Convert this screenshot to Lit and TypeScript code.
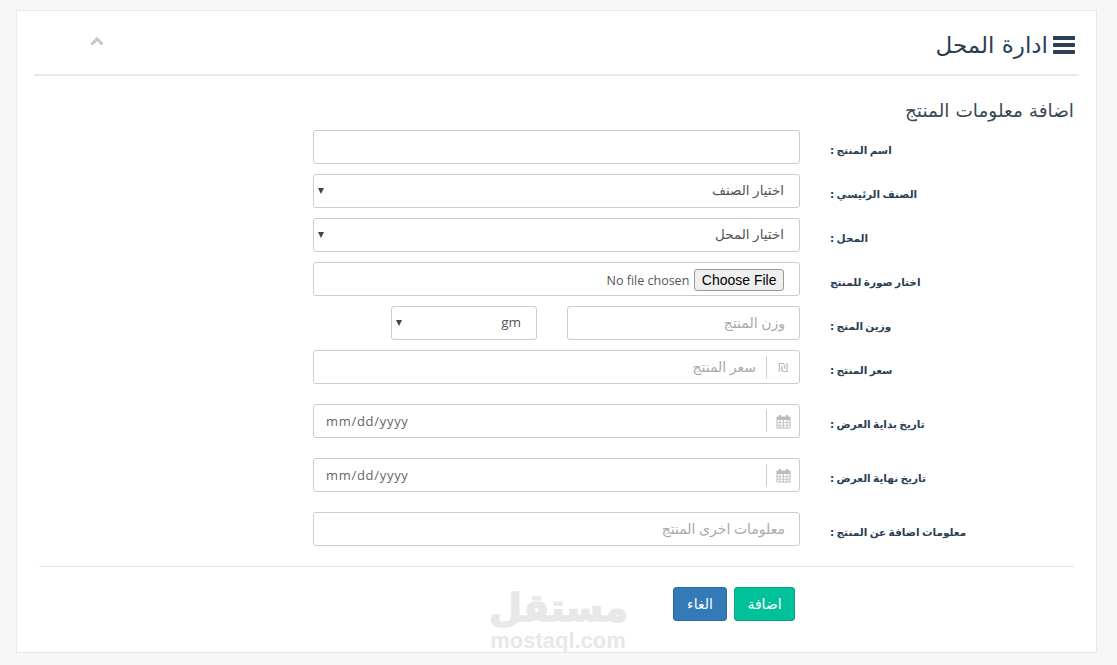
import { LitElement, html, css } from "lit";
import { customElement } from "lit/decorators.js";

const calendarIcon = html`<svg class="cal" width="15" height="15" viewBox="0 0 15 15">
  <path d="M1 3h13v11H1z" fill="none" stroke="currentColor"/>
  <path d="M1 3h13v3H1z" fill="currentColor"/>
  <path d="M4 1v3M11 1v3" stroke="currentColor" stroke-width="2"/>
  <path d="M4 6v8M7.5 6v8M11 6v8M1 8.7h13M1 11.3h13" stroke="currentColor" stroke-width=".8"/>
</svg>`;

@customElement("app-root")
export class AppRoot extends LitElement {
  static styles = css`
    :host {
      display: block;
      height: 665px;
      background: #f7f7f7;
      overflow: hidden;
      font-family: "DejaVu Sans", "Noto Sans", sans-serif;
      color: #2a3f54;
    }
    .panel {
      position: relative;
      box-sizing: border-box;
      height: 643px;
      margin: 10px 20px 0 16px;
      padding: 0 17px;
      background: #fff;
      border: 1px solid #e6e9ed;
    }
    .title {
      display: flex;
      align-items: center;
      justify-content: space-between;
      height: 65px;
      padding-top: 5px;
      box-sizing: border-box;
      border-bottom: 2px solid #e6e9ed;
    }
    .title-main {
      display: flex;
      align-items: center;
      gap: 5px;
      padding-right: 4px;
      font-size: 23px;
      color: #2a3f54;
      line-height: 1;
    }
    .chevron {
      margin-left: 56px;
      margin-bottom: 8px;
    }
    .body { padding: 0 5px; }
    .subtitle {
      margin: 0;
      height: 54px;
      box-sizing: border-box;
      padding-top: 24px;
      font-size: 18.5px;
      font-weight: normal;
      line-height: 22px;
      color: #3a4a58;
    }
    .row {
      display: grid;
      grid-template-columns: 244px 487px;
      column-gap: 30px;
      margin-bottom: 10px;
      height: 34px;
    }
    .row.wide { margin-bottom: 20px; }
    .label {
      text-align: left;
      font-size: 10.5px;
      word-spacing: -1.3px;
      font-weight: bold;
      line-height: 16px;
      padding-top: 12px;
      color: #2a3f54;
    }
    .field, input.plain, select {
      box-sizing: border-box;
      width: 100%;
      height: 34px;
      border: 1px solid #ccc;
      border-radius: 3px;
      background: #fff;
      font-size: 14px;
      color: #555;
      font-family: "Open Sans", "DejaVu Sans", sans-serif;
    }
    input.plain { padding: 5px 14px 7px; outline: none; }
    select {
      appearance: none;
      padding: 5px 15px 7px;
      font-size: 13.5px;
    }
    .select { position: relative; display: block; }
    .select::after {
      content: "";
      position: absolute;
      left: 5px;
      top: 14px;
      border-left: 3px solid transparent;
      border-right: 3px solid transparent;
      border-top: 6px solid #444;
    }
    input::placeholder { color: #aaa; opacity: 1; }
    .field { display: flex; align-items: center; }
    .field input {
      flex: 1;
      min-width: 0;
      border: 0;
      outline: none;
      background: transparent;
      font: inherit;
      color: inherit;
      padding: 0 10px 2px;
    }
    .field input.date {
      direction: ltr;
      text-align: left;
      padding: 0 12px 1px;
      letter-spacing: 0.7px;
      font-size: 13px;
      color: #666;
    }
    .addon {
      width: 32px;
      height: 22px;
      flex: none;
      display: flex;
      align-items: center;
      justify-content: center;
      border-left: 1px solid #ccc;
      color: #bbb;
      font-family: "DejaVu Sans", sans-serif;
      font-size: 13px;
    }
    .cal { display: block; }
    .file {
      padding: 1px 15px 0;
    }
    .file input {
      padding: 0;
      font-size: 12.5px;
      color: #555;
      font-family: "Open Sans", sans-serif;
      height: 22px;
    }
    .file input::file-selector-button {
      font-family: "Liberation Sans", Arial, sans-serif;
      font-size: 14px;
      height: 22px;
      padding: 0 6.5px;
      margin: 0 0 0 5px;
      color: #000;
      background: #efefef;
      border: 1px solid #999;
      border-radius: 3px;
    }
    .pair { display: flex; gap: 30px; }
    .pair .weight { width: 233px; flex: none; }
    .pair .select { width: 146px; flex: none; }
    hr {
      margin: 0;
      height: 1px;
      border: 0;
      background: #e5e5e5;
    }
    .actions {
      display: flex;
      gap: 7px;
      padding: 20px 279px 0 0;
    }
    .btn {
      height: 34px;
      padding: 0;
      box-sizing: border-box;
      border-radius: 3px;
      border: 1px solid;
      color: #fff;
      font-family: inherit;
      font-size: 14px;
    }
    .btn.add { width: 61px; background: #00c19a; border-color: #10a585; }
    .btn.cancel { width: 54px; background: #337ab7; border-color: #2e6da4; }
    .mark {
      position: absolute;
      left: 472px;
      top: 575px;
      width: 138px;
      text-align: center;
      color: #e8e8e8;
      direction: ltr;
      pointer-events: none;
    }
    .mark b {
      display: block;
      font-size: 38px;
      line-height: 44px;
      -webkit-text-stroke: 1.5px #e8e8e8;
    }
    .mark span {
      display: block;
      font-family: "Liberation Sans", Arial, sans-serif;
      font-weight: bold;
      font-size: 22px;
      line-height: 21px;
    }
  `;

  private row(label: string, control: unknown, wide = false) {
    return html`<div class="row ${wide ? "wide" : ""}">
      <div class="label">${label}</div>
      <div>${control}</div>
    </div>`;
  }

  private select(text: string) {
    return html`<span class="select"><select><option>${text}</option></select></span>`;
  }

  private dateField() {
    return html`<div class="field">
      <span class="addon">${calendarIcon}</span>
      <input class="date" value="mm/dd/yyyy" />
    </div>`;
  }

  render() {
    return html`<div class="panel" dir="rtl">
      <div class="title">
        <div class="title-main">
          <svg width="22" height="18" viewBox="0 0 22 18" fill="currentColor">
            <rect y="0" width="22" height="4" rx=".8" />
            <rect y="7" width="22" height="4" rx=".8" />
            <rect y="14" width="22" height="4" rx=".8" />
          </svg>
          <span>ادارة المحل</span>
        </div>
        <svg class="chevron" width="14" height="9" viewBox="0 0 14 9">
          <path d="M1.5 7.5 7 2l5.5 5.5" fill="none" stroke="#c5c7cb" stroke-width="3" />
        </svg>
      </div>
      <div class="body">
        <h4 class="subtitle">اضافة معلومات المنتج</h4>
        ${this.row("اسم المنتج :", html`<input class="plain" />`)}
        ${this.row("الصنف الرئيسي :", this.select("اختيار الصنف"))}
        ${this.row("المحل :", this.select("اختيار المحل"))}
        ${this.row("اختار صورة للمنتج", html`<div class="field file"><input type="file" dir="rtl" /></div>`)}
        ${this.row(
          "وزين المتج :",
          html`<div class="pair">
            <input class="plain weight" placeholder="وزن المنتج" />
            ${this.select("gm")}
          </div>`,
        )}
        ${this.row(
          "سعر المنتج :",
          html`<div class="field">
            <span class="addon">₪</span>
            <input placeholder="سعر المنتج" />
          </div>`,
          true,
        )}
        ${this.row("تاريخ بداية العرض :", this.dateField(), true)}
        ${this.row("تاريخ نهاية العرض :", this.dateField(), true)}
        ${this.row("معلومات اضافة عن المنتج :", html`<input class="plain" placeholder="معلومات اخرى المنتج" />`, true)}
        <hr />
        <div class="actions">
          <button class="btn add">اضافة</button>
          <button class="btn cancel">الغاء</button>
        </div>
      </div>
      <div class="mark"><b>مستقل</b><span>mostaql.com</span></div>
    </div>`;
  }
}
